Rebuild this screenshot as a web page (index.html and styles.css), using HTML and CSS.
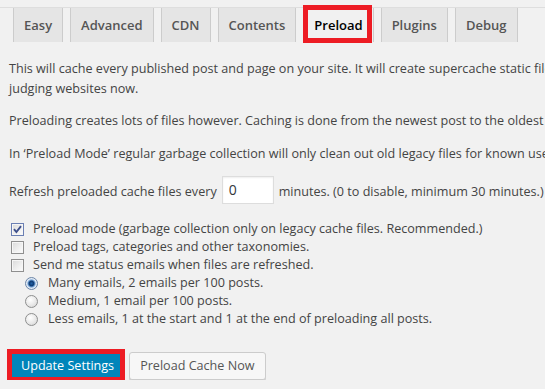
FILE: index.html
```html
<!DOCTYPE html>
<html>
<head>
<meta charset="utf-8">
<link rel="stylesheet" href="styles.css">
</head>
<body>
<div class="page">
  <nav class="tabs">
    <a class="tab">Easy</a>
    <a class="tab">Advanced</a>
    <a class="tab">CDN</a>
    <a class="tab">Contents</a>
    <a class="tab tab-active mark mark-tab">Preload</a>
    <a class="tab">Plugins</a>
    <a class="tab">Debug</a>
  </nav>
  <div class="content">
    <p>This will cache every published post and page on your site. It will create supercache static files so unknown visitors (including bots) will hit a cached page. This will probably help your Google ranking as they are using speed as a metric when<br>judging websites now.</p>
    <p>Preloading creates lots of files however. Caching is done from the newest post to the oldest so please consider only caching the newest if you have lots (10,000+) of posts. This is especially important on shared hosting.</p>
    <p>In ‘Preload Mode’ regular garbage collection will only clean out old legacy files for known users, not the preloaded supercache files. This is a recommended setting when the cache is preloaded.</p>
    <div class="refresh">
      <span>Refresh preloaded cache files every</span>
      <span class="input">0</span>
      <span>minutes. (0 to disable, minimum 30 minutes.)</span>
    </div>
    <ul class="options">
      <li class="opt"><span class="cb cb-checked"><svg viewBox="0 0 11 11" width="11" height="11"><path d="M2 5.2 L4.4 8 L9 2.2" fill="none" stroke="#3d4f8c" stroke-width="1.9"/></svg></span>Preload mode (garbage collection only on legacy cache files. Recommended.)</li>
      <li class="opt"><span class="cb"></span>Preload tags, categories and other taxonomies.</li>
      <li class="opt"><span class="cb"></span>Send me status emails when files are refreshed.</li>
      <li class="opt opt-radio"><span class="rb rb-on"></span>Many emails, 2 emails per 100 posts.</li>
      <li class="opt opt-radio"><span class="rb"></span>Medium, 1 email per 100 posts.</li>
      <li class="opt opt-radio"><span class="rb"></span>Less emails, 1 at the start and 1 at the end of preloading all posts.</li>
    </ul>
    <div class="actions">
      <span class="btn btn-primary mark mark-btn">Update Settings</span>
      <span class="btn">Preload Cache Now</span>
    </div>
  </div>
</div>
</body>
</html>
```
FILE: styles.css
```css
html, body {
  margin: 0;
  padding: 0;
  overflow: hidden;
  background: #f1f1f1;
}
body {
  font-family: "Open Sans", "Noto Sans", sans-serif;
  font-size: 12.6px;
  color: #444;
}
.page {
  padding-top: 7px;
}
.tabs {
  display: flex;
  gap: 7px;
  border-top: 1px solid #dedede;
  padding-left: 13px;
}
.tab {
  display: block;
  border: 1px solid #ccc;
  border-top: none;
  border-bottom: none;
  background: #e5e5e5;
  color: #555;
  font-size: 13px;
  font-weight: 600;
  line-height: 24px;
  padding: 5px 10px 5px;
  white-space: nowrap;
}
.tab-active {
  background: #f1f1f1;
  color: #000;
}
.mark {
  position: relative;
}
.mark::after {
  content: "";
  position: absolute;
  border: 5px solid #ed1c24;
  pointer-events: none;
}
.mark-tab::after {
  left: -1px;
  right: 1px;
  top: -3px;
  bottom: -1px;
}
.mark-btn::after {
  left: -4px;
  right: -1px;
  top: -4px;
  bottom: -3px;
}
.content {
  padding-left: 9px;
  padding-top: 4px;
  white-space: nowrap;
}
.content p {
  margin: 13px 0;
  line-height: 19.5px;
}
.refresh {
  display: flex;
  align-items: center;
  gap: 5px;
  margin-top: 13px;
}
.refresh > span:first-child,
.refresh > span:last-child {
  padding-top: 3px;
}
.input {
  display: inline-block;
  box-sizing: border-box;
  width: 52px;
  height: 28px;
  line-height: 26px;
  padding: 0 6px;
  background: #fff;
  border: 1px solid #ddd;
  box-shadow: inset 0 1px 2px rgba(0,0,0,0.07);
  color: #32373c;
  font-size: 14px;
}
.options {
  list-style: none;
  margin: 16px 0 0;
  padding: 0;
}
.opt {
  display: flex;
  align-items: center;
  height: 18px;
  line-height: 18px;
}
.opt-radio {
  padding-left: 16px;
}
.cb {
  box-sizing: border-box;
  width: 13px;
  height: 13px;
  margin: 0 9px 0 2px;
  border: 1px solid #8f8f8f;
  background: linear-gradient(135deg, #d9d9d9 0%, #f0f0f0 60%, #fdfdfd 100%);
  box-shadow: inset 0 0 0 1px #f6f6f6;
  display: flex;
  align-items: center;
  justify-content: center;
}
.cb-checked {
  border-color: #6b7fb3;
}
.cb svg {
  display: block;
}
.rb {
  box-sizing: border-box;
  width: 13px;
  height: 13px;
  margin: 0 10px 0 0;
  border-radius: 50%;
  border: 1px solid #8e8f8f;
  background: radial-gradient(circle at 40% 35%, #ffffff 0%, #e8e8e8 55%, #cfcfcf 100%);
}
.rb-on {
  border-color: #6c86a8;
  background: radial-gradient(circle at 50% 50%, #1f5fa5 0%, #0f3b73 30%, #6b9cd1 45%, #e6eef8 60%, #d3d9e2 100%);
}
.actions {
  display: flex;
  gap: 4px;
  margin-top: 24px;
  padding-left: 1px;
}
.btn {
  display: inline-block;
  box-sizing: border-box;
  height: 28px;
  line-height: 26px;
  padding: 0 10px 1px;
  font-size: 12.6px;
  border-radius: 3px;
  border: 1px solid #ccc;
  background: #f7f7f7;
  color: #555;
  box-shadow: 0 1px 0 #ccc;
}
.btn-primary {
  background: #0085ba;
  border-color: #0073aa #006799 #006799;
  box-shadow: 0 1px 0 #006799;
  color: #fff;
}
```
